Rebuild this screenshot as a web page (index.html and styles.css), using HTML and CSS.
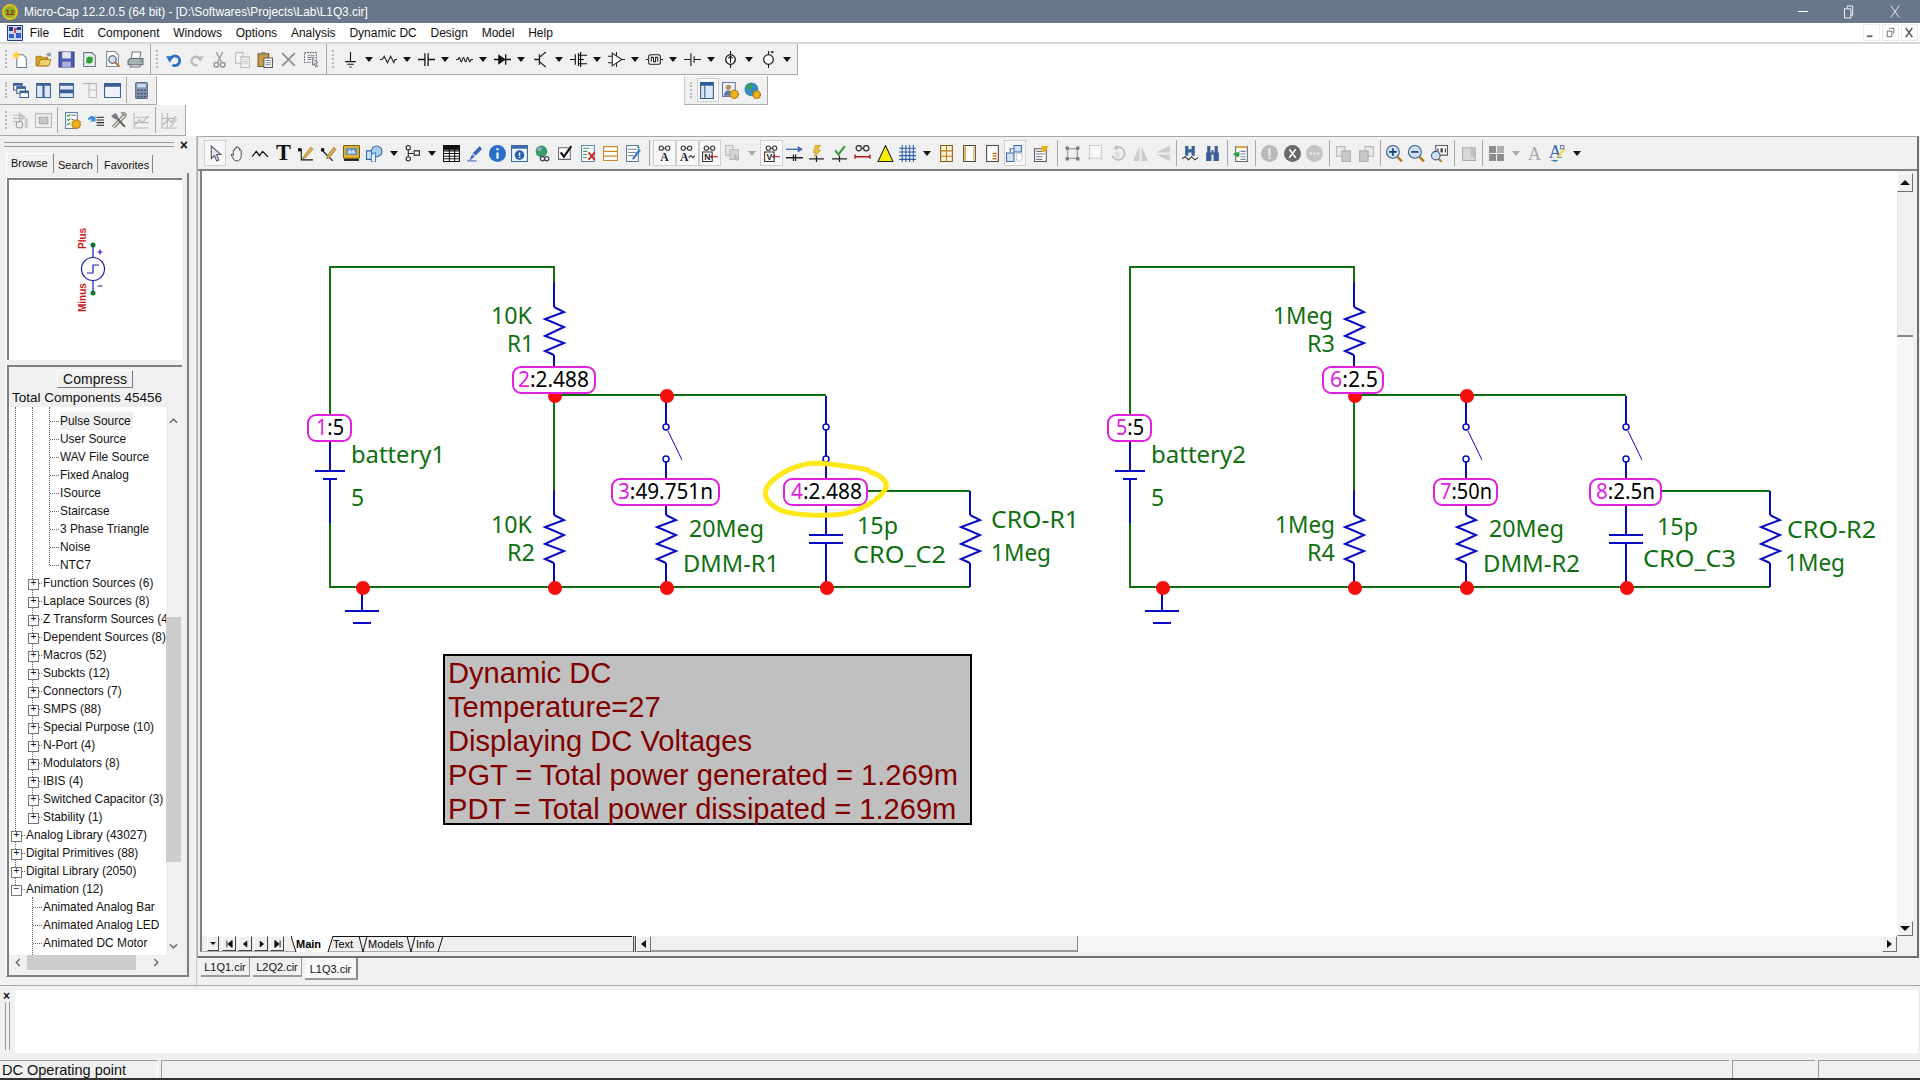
FILE: index.html
```html
<!DOCTYPE html>
<html lang="en">
<head>
  <meta charset="UTF-8" />
  <title>Micro-Cap 12.2.0.5 (64 bit) - [D:\Softwares\Projects\Lab\L1Q3.cir]</title>
  <link rel="stylesheet" href="styles.css">
</head>
<body>

  <!-- Icon set -->
  <svg class="defs" aria-hidden="true">
    <defs>
      <symbol id="i-new" viewBox="0 0 16 16"><path d="M4.5 3.5h6l3 3v9h-9z" fill="#fff" stroke="#6a7a8a"/><path d="M4 0l1 2 2-1-1 2 2 1-2 1 1 2-2-1-1 2-1-2-2 1 1-2-2-1 2-1-1-2 2 1z" fill="#ffd23c"/></symbol>
      <symbol id="i-open" viewBox="0 0 16 16"><path d="M1 5h5l1 1h5v8H1z" fill="#d9a02c" stroke="#9a7418" stroke-width=".8"/><path d="M3 14l2-6h10l-2 6z" fill="#f4d06c" stroke="#9a7418" stroke-width=".8"/><path d="M10 4q2-3 4-2l1-1v4h-4l1-1q-1-.5-2 0z" fill="#8a9bb0"/></symbol>
      <symbol id="i-save" viewBox="0 0 16 16"><path d="M1 1h14v14H1z" fill="#4c5cb8" stroke="#2c3a80"/><path d="M4 1h8v6H4z" fill="#e4e6f0"/><path d="M4 10h8v5H4z" fill="#a8b2dc"/></symbol>
      <symbol id="i-revert" viewBox="0 0 16 16"><path d="M2.500 1.500h8l3 3v10h-11z" fill="#e8eef0" stroke="#6a7a8a"/><path d="M5 8a3 3 0 0 1 5-2l1-1v4H7l1-1a1.500 1.500 0 0 0-2 1zM11 9a3 3 0 0 1-5 2l-1 1V8h4l-1 1a1.500 1.500 0 0 0 2-1z" fill="#2aa02a"/></symbol>
      <symbol id="i-preview" viewBox="0 0 16 16"><path d="M2.500 .5h8l3 3v11h-11z" fill="#fff" stroke="#7a8a9a"/><circle cx="8" cy="8" r="3.500" fill="#cfe2f4" stroke="#445"/><path d="M10.500 10.500l4 4" stroke="#b5792a" stroke-width="2"/></symbol>
      <symbol id="i-print" viewBox="0 0 16 16"><path d="M5 1h8l-1 6H4z" fill="#fff" stroke="#778"/><path d="M3 7h12v6H1v-4z" fill="#a8b0b8" stroke="#667"/><path d="M4 13h9l-1 2H3z" fill="#e8e8e8" stroke="#778"/><path d="M12 9h2v1h-2z" fill="#2b2"/></symbol>
      <symbol id="i-undo" viewBox="0 0 16 16"><path d="M5 8a4.500 4.500 0 1 1 2 5" fill="none" stroke="#2a72c8" stroke-width="2.600"/><path d="M1 5h7l-3.500 6z" fill="#2a72c8"/></symbol>
      <symbol id="i-redo" viewBox="0 0 16 16"><path d="M11 8a4 4 0 1 0-2 5" fill="none" stroke="#bcbcbc" stroke-width="2.200"/><path d="M15 5H8l3.500 5z" fill="#bcbcbc"/></symbol>
      <symbol id="i-cut" viewBox="0 0 16 16"><path d="M5 1l5 10M11 1L6 11" stroke="#aaa" stroke-width="1.500"/><circle cx="5" cy="13" r="2.200" fill="none" stroke="#999" stroke-width="1.500"/><circle cx="11" cy="13" r="2.200" fill="none" stroke="#999" stroke-width="1.500"/></symbol>
      <symbol id="i-copy" viewBox="0 0 16 16"><path d="M1.500 1.500h7v10h-7z" fill="#f4f4f4" stroke="#bbb"/><path d="M6.500 5.500h8v10h-8z" fill="#f4f4f4" stroke="#bbb"/><path d="M8 8h5M8 10h5M8 12h5" stroke="#ccc"/></symbol>
      <symbol id="i-paste" viewBox="0 0 16 16"><path d="M1 2.500h10v12H1z" fill="#c89a44" stroke="#7a5a1a"/><path d="M4 1h4v3H4z" fill="#888"/><path d="M6.500 6.500h8v9h-8z" fill="#fff" stroke="#555"/><path d="M8 9h5M8 11h5M8 13h5" stroke="#789"/></symbol>
      <symbol id="i-del" viewBox="0 0 16 16"><path d="M2 2l12 12M14 2L2 14" stroke="#909090" stroke-width="1.700"/></symbol>
      <symbol id="i-selall" viewBox="0 0 16 16"><path d="M1.500 1.500h11v9h-11z" fill="#fff" stroke="#555" stroke-dasharray="1.500 1"/><path d="M4 4h7M4 6h7M4 8h4" stroke="#889"/><path d="M9 7l5 4-2 .5 1.500 3-1.500.5-1.500-3-1.500 1.500z" fill="#dde" stroke="#556" stroke-width=".7"/></symbol>

      <symbol id="i-gnd" viewBox="0 0 16 16"><path d="M8 1v9M3 10h10M5 12.500h6M7 15h2" stroke="#111" fill="none"/></symbol>
      <symbol id="i-res" viewBox="0 0 16 16"><path d="M0 8h2l2-3 3 6 3-6 3 6 1-3h2" stroke="#222" fill="none"/></symbol>
      <symbol id="i-cap" viewBox="0 0 16 16"><path d="M0 8h6.500M9.500 8H16M6.500 2v12M9.500 2v12" stroke="#111" stroke-width="1.200" fill="none"/></symbol>
      <symbol id="i-ind" viewBox="0 0 16 16"><path d="M0 8h2q1-4 2 0t2 0 2 0 2 0 2 0 2 0h2" stroke="#222" fill="none"/></symbol>
      <symbol id="i-diode" viewBox="0 0 16 16"><path d="M0 8h16M11 3v10" stroke="#111" stroke-width="1.200"/><path d="M4 3l7 5-7 5z" fill="#111"/></symbol>
      <symbol id="i-bjt" viewBox="0 0 16 16"><path d="M2 8h5M7 3v10M7 6l6-5M7 10l6 5" stroke="#222" stroke-width="1.200" fill="none"/></symbol>
      <symbol id="i-mos" viewBox="0 0 16 16"><path d="M0 8h5M5 3v10M8 2v12M8 4h8M8 12h8M8 8h5M10 1v14" stroke="#111" stroke-width="1.100" fill="none"/></symbol>
      <symbol id="i-opamp" viewBox="0 0 16 16"><path d="M4 2l9 6-9 6z" fill="#fff" stroke="#222"/><path d="M0 5h4M0 11h4M13 8h3M8 1v4M8 11v4" stroke="#222"/></symbol>
      <symbol id="i-ic" viewBox="0 0 16 16"><rect x="2.500" y="3.500" width="11" height="9" rx="2" fill="#fff" stroke="#222"/><path d="M5 10V6h2v4h2V6h2v4M0 8h2M14 8h2" stroke="#222" fill="none"/></symbol>
      <symbol id="i-batt" viewBox="0 0 16 16"><path d="M0 8h6.500M9.500 8H16M6.500 2v12M9.500 5v6" stroke="#222" stroke-width="1.100" fill="none"/></symbol>
      <symbol id="i-isrc" viewBox="0 0 16 16"><circle cx="8" cy="8" r="4.500" fill="#fff" stroke="#111" stroke-width="1.200"/><path d="M8 0v3.500M8 12.500V16M8 11V5M6 7l2-2.500L10 7" stroke="#111" fill="none"/></symbol>
      <symbol id="i-vsrc" viewBox="0 0 16 16"><circle cx="8" cy="8" r="4.500" fill="#fff" stroke="#222" stroke-width="1.200"/><path d="M8 0v3.500M8 12.500V16M10 1h3M11.500 0v2" stroke="#222" fill="none"/></symbol>

      <symbol id="i-cascade" viewBox="0 0 16 16"><path d="M1.500 1.500h8v6h-8z" fill="#fff" stroke="#3a5f96"/><path d="M1.500 1.500h8v2h-8z" fill="#3a5f96"/><path d="M4.500 4.500h8v6h-8z" fill="#fff" stroke="#3a5f96"/><path d="M4.500 4.500h8v2h-8z" fill="#3a5f96"/><path d="M7.500 8.500h8v6h-8z" fill="#fff" stroke="#3a5f96"/><path d="M7.500 8.500h8v2h-8z" fill="#3a5f96"/></symbol>
      <symbol id="i-tilev" viewBox="0 0 16 16"><path d="M1.500 1.500h6v13h-6zM8.500 1.500h6v13h-6z" fill="#dfe8f4" stroke="#3a5f96"/><path d="M1.500 1.500h6v2h-6zM8.500 1.500h6v2h-6z" fill="#3a5f96"/></symbol>
      <symbol id="i-tileh" viewBox="0 0 16 16"><path d="M1.500 1.500h13v6h-13zM1.500 8.500h13v6h-13z" fill="#dfe8f4" stroke="#3a5f96"/><path d="M1.500 1.500h13v2h-13zM1.500 8.500h13v2h-13z" fill="#3a5f96"/></symbol>
      <symbol id="i-overlap" viewBox="0 0 16 16"><path d="M1.500 1.500h6v13h7v-7h-7" fill="#f4f4f4" stroke="#b8b8b8"/><path d="M7.500 1.500h7v6" fill="none" stroke="#b8b8b8"/></symbol>
      <symbol id="i-window" viewBox="0 0 16 16"><path d="M.5 1.500h15v13H.5z" fill="#eef3fa" stroke="#3a5f96"/><path d="M.5 1.500h15v3H.5z" fill="#3a5f96"/></symbol>
      <symbol id="i-calc" viewBox="0 0 16 16"><rect x="2.500" y=".5" width="11" height="15" rx="1" fill="#8a9ab8" stroke="#5a6a88"/><path d="M4 2h8v3H4z" fill="#cde"/><path d="M4 7h2v1.500H4zM7 7h2v1.500H7zM10 7h2v1.500h-2zM4 10h2v1.500H4zM7 10h2v1.500H7zM10 10h2v1.500h-2zM4 13h2v1.500H4zM7 13h2v1.500H7zM10 13h2v1.500h-2z" fill="#444c66"/></symbol>

      <symbol id="i-run" viewBox="0 0 16 16"><path d="M1 3h7M1 6h7M1 9h4M7 1l5 4-5 4z" fill="#ccc" stroke="#bbb"/><circle cx="7" cy="12" r="3" fill="none" stroke="#999"/><path d="M12 6h3v9h-3z" fill="#ccc"/></symbol>
      <symbol id="i-stop" viewBox="0 0 16 16"><path d="M.5 1.500h15v13H.5z" fill="#eee" stroke="#bbb"/><path d="M4 5h8v6H4z" fill="#c8c8c8" stroke="#aaa"/></symbol>
      <symbol id="i-props" viewBox="0 0 16 16"><path d="M1.500 .5h11v15h-11z" fill="#fff" stroke="#5a7fae"/><path d="M3 3l1 1 2-2M3 7l1 1 2-2M3 11l1 1 2-2" fill="none" stroke="#292"/><path d="M7 3h4M7 7h2" stroke="#669"/><circle cx="11.500" cy="11.500" r="4" fill="#f0b020" stroke="#b57a10" stroke-dasharray="1.500 .7" stroke-width="1.500"/></symbol>
      <symbol id="i-listgo" viewBox="0 0 16 16"><path d="M1 6q3-4 6-1l1-2v6H3l1.500-1.500Q3 6 1 8z" fill="#3a8ad4"/><path d="M9 5h7M9 7.500h7M9 10h7M9 12.500h7" stroke="#222"/></symbol>
      <symbol id="i-tools" viewBox="0 0 16 16"><path d="M2 14L12 3M4 15L14 5" stroke="#888" stroke-width="1.300"/><path d="M14 14L5 4" stroke="#665" stroke-width="2"/><path d="M1 4l4-3 3 3-2 1-1 2z" fill="#778"/><path d="M10 1a3 3 0 0 1 5 4l-2-1-1-1z" fill="#999"/></symbol>
      <symbol id="i-chart" viewBox="0 0 16 16"><path d="M1 1v14h14M1 5h14M1 10h14" fill="none" stroke="#bbb"/><path d="M2 12l4-5 3 3 5-6" fill="none" stroke="#aaa"/></symbol>
      <symbol id="i-chart2" viewBox="0 0 16 16"><path d="M1 1v14h14M1 6h12M6 1v13" fill="none" stroke="#bbb"/><path d="M2 12l5-5 3 3 4-6" fill="none" stroke="#aaa"/><path d="M8 14l6-8 1.500 1-6 8z" fill="#ccc"/></symbol>

      <symbol id="i-panel" viewBox="0 0 16 16"><path d="M1.500 .5h12v15h-12z" fill="#dfe8f4" stroke="#2d5a96"/><path d="M1.500 .5h12v3h-12z" fill="#2d5a96"/><path d="M5.500 3.500v12" stroke="#2d5a96"/></symbol>
      <symbol id="i-people" viewBox="0 0 16 16"><path d="M.5 .5h12v13H.5z" fill="#e8f0f8" stroke="#6a7a9a"/><circle cx="6" cy="5" r="2.500" fill="#c08a5a"/><path d="M2 13q0-5 4-5t4 5z" fill="#5a7aa8"/><circle cx="11.500" cy="11.500" r="3.800" fill="#f0b020" stroke="#b57a10" stroke-dasharray="1.500 .7" stroke-width="1.500"/></symbol>
      <symbol id="i-globegear" viewBox="0 0 16 16"><circle cx="7" cy="7" r="6.500" fill="#3a8ac4"/><path d="M3 3q3-2 5 0l-1 3-4 1zM8 9l4-1-1 4-3 1z" fill="#3aa03a"/><circle cx="12" cy="12" r="3.500" fill="#f0b020" stroke="#b57a10" stroke-dasharray="1.500 .7" stroke-width="1.500"/></symbol>

      <symbol id="i-pointer" viewBox="0 0 16 16"><path d="M5 1v12l3-3 2 5 2-1-2-5h4z" fill="#dfe6ee" stroke="#556"/></symbol>
      <symbol id="i-hand" viewBox="0 0 16 16"><path d="M4 10V5q1-1 1.500 0V3q1-1 1.500 0v-1q1-1 1.500 0v1q1-1 1.500 0v2q1-1 1.500 0v6q-1 4-4 4t-4-3L2 9q1-1 2 1z" fill="#f4f4f4" stroke="#333" stroke-width=".8"/></symbol>
      <symbol id="i-wave" viewBox="0 0 16 16"><path d="M0 11l4-5 3 4 3-4 5 5" fill="none" stroke="#111" stroke-width="1.200"/></symbol>
      <symbol id="i-text" viewBox="0 0 16 16"><text class="ic-serif" x="8" y="14.500" text-anchor="middle">T</text></symbol>
      <symbol id="i-wirepen" viewBox="0 0 16 16"><path d="M1 4h3v10h11" fill="none" stroke="#111"/><path d="M1 3h3v3H1z" fill="#111"/><path d="M6 11l7-9 2 2-7 8-3 1z" fill="#e8b050" stroke="#8a6a20" stroke-width=".6"/></symbol>
      <symbol id="i-wirepen2" viewBox="0 0 16 16"><path d="M1 4l11 11" fill="none" stroke="#111"/><path d="M1 3h3v3H1z" fill="#111"/><path d="M7 10l6-8 2 2-6 8-3 1z" fill="#d8a850" stroke="#8a6a20" stroke-width=".6"/></symbol>
      <symbol id="i-bus" viewBox="0 0 16 16"><rect x=".5" y=".5" width="15" height="12" rx="1" fill="#e8b820" stroke="#7a5a10"/><path d="M2.500 2.500h11v7h-11z" fill="#6a90c0"/><path d="M4 8l2-4 2 2 2-2 2 4z" fill="#cde"/><path d="M1 13h14v2H1z" fill="#222"/></symbol>
      <symbol id="i-shapes" viewBox="0 0 16 16"><path d="M.5 5.500h8v8h-8z" fill="#cfe2f4" stroke="#2d6aa6"/><circle cx="10" cy="6" r="5" fill="#a8cdee" stroke="#2d6aa6"/><path d="M5 16V9l4-2v9z" fill="#e8f2fb" stroke="#2d6aa6" stroke-width=".8"/></symbol>
      <symbol id="i-flow" viewBox="0 0 16 16"><circle cx="4" cy="2.500" r="2" fill="#fff" stroke="#222"/><path d="M9.500 5.500h5v4h-5z" fill="#fff" stroke="#222"/><circle cx="4" cy="13" r="2" fill="#fff" stroke="#222"/><path d="M4 4.500V11M4 8h5" stroke="#222"/></symbol>
      <symbol id="i-table" viewBox="0 0 16 16"><path d="M.5 .5h15v15H.5z" fill="#fff" stroke="#111"/><path d="M.5 1h15v3H.5zM1 5.500h14M1 8h14M1 10.500h14M1 13h14M6 4v11M11 4v11" fill="#111" stroke="#111"/></symbol>
      <symbol id="i-pen" viewBox="0 0 16 16"><path d="M3 15l3-7 7-7 2 3-7 7z" fill="#3a6ab8"/><path d="M1 15h9" stroke="#3a6ab8"/><path d="M6 8l3 3" stroke="#fff"/></symbol>
      <symbol id="i-info" viewBox="0 0 16 16"><circle cx="8" cy="8" r="8" fill="#2a6ec8"/><path d="M7 3h2v2H7zM7 7h2v6H7z" fill="#fff"/></symbol>
      <symbol id="i-help" viewBox="0 0 16 16"><path d="M.5 .5h15v15H.5z" fill="#eef3fa" stroke="#3a6aa6"/><path d="M.5 .5h15v3H.5z" fill="#3a6aa6"/><circle cx="8" cy="9.500" r="4.500" fill="#2a60b0"/><path d="M7.300 7h1.400v3H7.300zM7.300 11h1.400v1.200H7.300z" fill="#fff"/></symbol>
      <symbol id="i-globelink" viewBox="0 0 16 16"><circle cx="7" cy="6" r="5.500" fill="#3a9a6a"/><path d="M4 2q3-1 4 1L6 6 3 5z" fill="#8ac"/><path d="M6 13a2 2 0 0 1 4 0a2 2 0 0 1-4 0M10 13a2 2 0 0 1 4 0a2 2 0 0 1-4 0" fill="none" stroke="#445" stroke-width="1.200"/></symbol>
      <symbol id="i-check" viewBox="0 0 16 16"><path d="M1.500 2.500h11v11h-11z" fill="#fff" stroke="#667"/><path d="M3.500 7l3 4 7-10" fill="none" stroke="#111" stroke-width="2"/></symbol>
      <symbol id="i-xchart" viewBox="0 0 16 16"><path d="M1.500 .5h12v15h-12z" fill="#fff" stroke="#5a8aa6"/><path d="M3 3h6M3 6h4M3 9h4M3 12h4" stroke="#3a9a5a"/><path d="M8 7l6 7M14 7l-6 7" stroke="#d02020" stroke-width="1.700"/></symbol>
      <symbol id="i-bars" viewBox="0 0 16 16"><path d="M1.500 1.500h13v13h-13z" fill="#fff" stroke="#c88a2a"/><path d="M1.500 6h13M1.500 10.500h13" stroke="#c88a2a" stroke-width="1.300"/></symbol>
      <symbol id="i-docedit" viewBox="0 0 16 16"><path d="M1.500 .5h11v15h-11z" fill="#fff" stroke="#5a7a9a"/><path d="M3 4h8M3 7h8M3 10h5" stroke="#78a"/><path d="M7 12l6-8 2 1-6 8-2 1z" fill="#3a7ac8"/><path d="M11 1l3 1-1 2z" fill="#2a8"/></symbol>
      <symbol id="i-ga" viewBox="0 0 16 16"><path d="M3 3a2 2 0 0 1 4 0a2 2 0 0 1-4 0M9 3a2 2 0 0 1 4 0a2 2 0 0 1-4 0M7 3h2" fill="none" stroke="#333"/><text class="ic-a" x="8" y="15" text-anchor="middle" fill="#223">A</text></symbol>
      <symbol id="i-gawave" viewBox="0 0 16 16"><path d="M2 3a2 2 0 0 1 4 0a2 2 0 0 1-4 0M8 3a2 2 0 0 1 4 0a2 2 0 0 1-4 0M6 3h2" fill="none" stroke="#333"/><text class="ic-a" x="5" y="15" text-anchor="middle" fill="#223">A</text><path d="M9 12l2-2 2 2 2-2" fill="none" stroke="#445"/></symbol>
      <symbol id="i-gn" viewBox="0 0 16 16"><path d="M3 3a2 2 0 0 1 4 0a2 2 0 0 1-4 0M9 3a2 2 0 0 1 4 0a2 2 0 0 1-4 0M7 3h2" fill="none" stroke="#333"/><path d="M1.500 6.500h9v9h-9z" fill="#fff" stroke="#333"/><text class="ic-n" x="6" y="14" text-anchor="middle" fill="#223">N</text><path d="M11 11h5" stroke="#b02020"/><path d="M11 9v4l-3-2z" fill="#b02020"/></symbol>
      <symbol id="i-pages" viewBox="0 0 16 16"><path d="M1.500 .5h7v9h-7z" fill="#e4e4e4" stroke="#bbb"/><path d="M5.500 4.500h8v9h-8z" fill="#d4d4d4" stroke="#bbb"/><path d="M9 8l5 4-1 3-3-1z" fill="#bbb"/></symbol>
      <symbol id="i-gv" viewBox="0 0 16 16"><path d="M3 3a2 2 0 0 1 4 0a2 2 0 0 1-4 0M9 3a2 2 0 0 1 4 0a2 2 0 0 1-4 0M7 3h2" fill="none" stroke="#333"/><path d="M1.500 6.500h9v9h-9z" fill="#fff" stroke="#333"/><text class="ic-n" x="6" y="14" text-anchor="middle" fill="#222">V</text><path d="M11 11h5" stroke="#b02020"/><path d="M11 9v4l-3-2z" fill="#b02020"/></symbol>
      <symbol id="i-arrowcap" viewBox="0 0 16 16"><path d="M0 4h13" stroke="#3a6ab0" stroke-width="1.200"/><path d="M11 1l5 3-5 3z" fill="#3a6ab0"/><path d="M0 12h16M7 9v6M9 9v6" stroke="#222" stroke-width="1.200"/></symbol>
      <symbol id="i-bolt" viewBox="0 0 16 16"><path d="M7 0h5L9 5h3L6 11l1-4H5z" fill="#e8c030" stroke="#a8861a" stroke-width=".5"/><path d="M1 13h14M8 10v6" stroke="#222" stroke-width="1.200"/></symbol>
      <symbol id="i-checkcap" viewBox="0 0 16 16"><path d="M4 5l3 4 6-8" fill="none" stroke="#3a9a3a" stroke-width="2"/><path d="M1 13h14M8 10v6" stroke="#222" stroke-width="1.200"/></symbol>
      <symbol id="i-gred" viewBox="0 0 16 16"><path d="M2 3a2.500 2.500 0 0 1 5 0a2.500 2.500 0 0 1-5 0M9 3a2.500 2.500 0 0 1 5 0a2.500 2.500 0 0 1-5 0M7 3h2" fill="none" stroke="#333" stroke-width="1.200"/><path d="M1 11h14M1 9v4M15 9v4" stroke="#b01818" stroke-width="1.300"/></symbol>
      <symbol id="i-tri" viewBox="0 0 16 16"><path d="M8 .5l7 15H1z" fill="#ffee00" stroke="#222"/></symbol>
      <symbol id="i-grid" viewBox="0 0 16 16"><path d="M3 0v16M6.500 0v16M10 0v16M13.500 0v16M0 3h16M0 6.500h16M0 10h16M0 13.500h16" stroke="#2a5ea8"/></symbol>
      <symbol id="i-forange" viewBox="0 0 16 16"><path d="M2.500 .5h11v15h-11z" fill="#fff2d8" stroke="#7a5a1a"/><path d="M2.500 5.500h11M2.500 10.500h11M8 .5v15" stroke="#c07818"/></symbol>
      <symbol id="i-doc" viewBox="0 0 16 16"><path d="M2.500 .5h11v15h-11z" fill="#fff" stroke="#4a4a3a"/><path d="M4 1.500v13" stroke="#e0b040" stroke-width="1.500"/><path d="M12 1.500v13" stroke="#e0b040"/></symbol>
      <symbol id="i-doc2" viewBox="0 0 16 16"><path d="M2.500 .5h11v15h-11z" fill="#fff" stroke="#4a4a3a"/><path d="M8 8h4M8 10.500h4M8 13h4" stroke="#c07818" stroke-width="1.300"/></symbol>
      <symbol id="i-layout" viewBox="0 0 16 16"><path d="M.5 7.500h7v8h-7z" fill="#cfe2f4" stroke="#3a6ab0"/><path d="M7.500 .5h7v6h-7z" fill="#cfe2f4" stroke="#3a6ab0"/><path d="M10 8h5v7h-5z" fill="#fff" stroke="#9ab" stroke-dasharray="1 1"/><path d="M4 7V3.500h3" fill="none" stroke="#3a6ab0"/></symbol>
      <symbol id="i-note" viewBox="0 0 16 16"><path d="M1.500 3.500h11v12h-11z" fill="#fff" stroke="#556"/><path d="M3 6h8M3 8.500h8M3 11h6M3 13.500h6" stroke="#778"/><path d="M8 1l7 0-4 6-3-1z" fill="#e8b820"/></symbol>
      <symbol id="i-bracket" viewBox="0 0 16 16"><path d="M3.500 3.500h9v9h-9z" fill="none" stroke="#888"/><path d="M1.500 1.500h3v3h-3zM11.500 1.500h3v3h-3zM1.500 11.500h3v3h-3zM11.500 11.500h3v3h-3z" fill="#777"/></symbol>
      <symbol id="i-greyrect" viewBox="0 0 16 16"><path d="M2.500 .5h11v12h-11z" fill="#fafafa" stroke="#ccc"/><path d="M1 14l2-2M15 14l-2-2" stroke="#ccc"/></symbol>
      <symbol id="i-rotate" viewBox="0 0 16 16"><path d="M8 2a6 6 0 1 1-5 8" fill="none" stroke="#bbb" stroke-width="1.500"/><path d="M8 0v5l-4-2z" fill="#bbb"/><path d="M6 6h4v6H6z" fill="#ddd"/></symbol>
      <symbol id="i-flip" viewBox="0 0 16 16"><path d="M7 1v14H1zM9 1v14h6z" fill="#ccc"/></symbol>
      <symbol id="i-flip2" viewBox="0 0 16 16"><path d="M14 1v6H1zM14 9v6L1 9z" fill="#ccc"/></symbol>
      <symbol id="i-binw" viewBox="0 0 16 16"><path d="M3 1h3v9H3zM9 1h3v9H9zM6 4h3v3H6z" fill="#3a5f96"/><path d="M0 13l3-2 3 3 3-3 3 3 3-2" fill="none" stroke="#333"/></symbol>
      <symbol id="i-bin" viewBox="0 0 16 16"><path d="M3 1h3v6H3zM10 1h3v6h-3zM2 7h5v8H2zM9 7h5v8H9zM7 5h2v4H7z" fill="#3a5f96"/></symbol>
      <symbol id="i-notegreen" viewBox="0 0 16 16"><path d="M2.500 1.500h11v14h-11z" fill="#fff" stroke="#667"/><path d="M3 1h10v2H3z" fill="#d8b040"/><path d="M7 6h5M7 8.500h5M7 11h5M7 13.500h5" stroke="#789"/><path d="M0 10q1-4 5-3l1-2v6H2l1-1q-1-1-3 0z" fill="#2aa04a"/></symbol>
      <symbol id="i-cbang" viewBox="0 0 16 16"><circle cx="8" cy="8" r="8" fill="#b8b8b8"/><path d="M7 3h2v7H7zM7 11h2v2H7z" fill="#eee"/></symbol>
      <symbol id="i-cx" viewBox="0 0 16 16"><circle cx="8" cy="8" r="8" fill="#6a6a6a"/><path d="M5 4l6 8M11 4l-6 8" stroke="#fff" stroke-width="1.500"/></symbol>
      <symbol id="i-cdots" viewBox="0 0 16 16"><circle cx="8" cy="8" r="8" fill="#c4c4c4"/><path d="M3.500 7h2v2h-2zM7 7h2v2H7zM10.500 7h2v2h-2z" fill="#f0f0f0"/></symbol>
      <symbol id="i-stack" viewBox="0 0 16 16"><path d="M1.500 1.500h8v9h-8z" fill="#e8e8e8" stroke="#b8b8b8"/><path d="M6.500 5.500h8v10h-8z" fill="#c8c8c8" stroke="#b0b0b0"/></symbol>
      <symbol id="i-stack2" viewBox="0 0 16 16"><path d="M6.500 1.500h8v9h-8z" fill="#e8e8e8" stroke="#b8b8b8"/><path d="M1.500 5.500h8v10h-8z" fill="#c8c8c8" stroke="#b0b0b0"/></symbol>
      <symbol id="i-zin" viewBox="0 0 16 16"><circle cx="6.500" cy="6.500" r="6" fill="#cfe2f4" stroke="#3a5a8a"/><path d="M3 6.500h7M6.500 3v7" stroke="#1a3a6a" stroke-width="1.500"/><path d="M10.500 11l4.500 4.500" stroke="#b5792a" stroke-width="2.400"/></symbol>
      <symbol id="i-zout" viewBox="0 0 16 16"><circle cx="6.500" cy="6.500" r="6" fill="#cfe2f4" stroke="#3a5a8a"/><path d="M3 6.500h7" stroke="#1a3a6a" stroke-width="1.500"/><path d="M10.500 11l4.500 4.500" stroke="#b5792a" stroke-width="2.400"/></symbol>
      <symbol id="i-z100" viewBox="0 0 16 16"><path d="M4.500 .5h11v9h-11z" fill="#fff" stroke="#556"/><path d="M6 3h1v4H6zM9 3h2v4H9zM13 3h1v4h-1z" fill="#333"/><circle cx="4.500" cy="10" r="4" fill="#cfe2f4" stroke="#3a5a8a"/><path d="M7 13l3 3" stroke="#b5792a" stroke-width="2"/></symbol>
      <symbol id="i-greypage" viewBox="0 0 16 16"><path d="M1.500 2.500h12v12h-12z" fill="#d8d8d8" stroke="#aaa"/><path d="M9 1l5 2v9l-5-2z" fill="#c0c0c0"/></symbol>
      <symbol id="i-grid4" viewBox="0 0 16 16"><path d="M1 1h6.500v6.500H1zM8.500 1H15v6.500H8.500zM1 8.500h6.500V15H1zM8.500 8.500H15V15H8.500z" fill="#8c8c8c"/><path d="M8.500 1H15v6.500H8.500z" fill="#b0b0b0"/></symbol>
      <symbol id="i-ag" viewBox="0 0 16 16"><text class="ic-ag" x="8" y="14.500" text-anchor="middle" fill="#a8a8a8">A</text></symbol>
      <symbol id="i-acol" viewBox="0 0 16 16"><text class="ic-ag" x="6" y="12" text-anchor="middle" fill="#3a6ab8">A</text><path d="M8 11l5-8 2 1-5 8z" fill="#f0d840"/><path d="M11 .5h3v3h-3z" fill="#fff" stroke="#5a7aa8"/><path d="M1 14h8l-3 2z" fill="#3a8ab8"/></symbol>
      <symbol id="i-mdimin" viewBox="0 0 16 16"><path d="M3 11h6v2H3z" fill="#666"/></symbol>
    </defs>
  </svg>

  <!-- Title bar -->
  <header class="titlebar">
    <svg class="app-icon" viewBox="0 0 16 16"><circle cx="8" cy="8" r="7" fill="#7fb62c" stroke="#e8c020" stroke-width="2"/><text class="app-num" x="8" y="11" text-anchor="middle">12</text></svg>
    <span class="title-text">Micro-Cap 12.2.0.5 (64 bit) - [D:\Softwares\Projects\Lab\L1Q3.cir]</span>
    <div class="win-btns">
      <span class="win-min"></span>
      <svg class="win-max" viewBox="0 0 12 14"><path d="M3.500 2.500v-2h6v10h-2M.5 3.500h7v10h-7z" fill="none" stroke="#fff"/></svg>
      <svg class="win-close" viewBox="0 0 12 14"><path d="M1 0l10 14M11 0L1 14" stroke="#fff"/></svg>
    </div>
  </header>

  <!-- Menu -->
  <nav class="menubar">
    <svg class="menu-icon" viewBox="0 0 16 16"><path d="M.5 .5h15v15H.5z" fill="#c8d8f0" stroke="#223a8a"/><path d="M2 2h4v4H2zM10 2h4v3h-4z" fill="#223a8a"/><path d="M2 9h5v4H2zM9 8h5v5H9z" fill="#3a5ac8"/><path d="M7 4h3M8 5v3" stroke="#d02020" stroke-width="1.500"/></svg>
    <span>File</span><span>Edit</span><span>Component</span><span>Windows</span><span>Options</span><span>Analysis</span><span>Dynamic DC</span><span>Design</span><span>Model</span><span>Help</span>
    <div class="mdi-btns">
      <span class="mdi"><svg viewBox="0 0 16 16"><use href="#i-mdimin"/></svg></span>
      <span class="mdi"><svg viewBox="0 0 16 16"><path d="M6.500 3.500h5v5h-1M4.500 6.500h5v6h-5z" fill="none" stroke="#666"/></svg></span>
      <span class="mdi"><svg viewBox="0 0 16 16"><path d="M4 3l7 10M11 3L4 13" stroke="#555" stroke-width="1.600"/></svg></span>
    </div>
  </nav>

  <!-- Main toolbars -->
  <section class="top-bars">
    <div class="bar-row">
      <div class="tb tb-file">
        <span class="b"><svg class="ic"><use href="#i-new"/></svg></span>
        <span class="b"><svg class="ic"><use href="#i-open"/></svg></span>
        <span class="b"><svg class="ic"><use href="#i-save"/></svg></span>
        <span class="b"><svg class="ic"><use href="#i-revert"/></svg></span>
        <span class="b"><svg class="ic"><use href="#i-preview"/></svg></span>
        <span class="b"><svg class="ic"><use href="#i-print"/></svg></span>
      </div>
      <div class="tb tb-edit">
        <span class="b"><svg class="ic"><use href="#i-undo"/></svg></span>
        <span class="b"><svg class="ic"><use href="#i-redo"/></svg></span>
        <span class="b"><svg class="ic"><use href="#i-cut"/></svg></span>
        <span class="b"><svg class="ic"><use href="#i-copy"/></svg></span>
        <span class="b"><svg class="ic"><use href="#i-paste"/></svg></span>
        <span class="b"><svg class="ic"><use href="#i-del"/></svg></span>
        <span class="b"><svg class="ic"><use href="#i-selall"/></svg></span>
      </div>
      <div class="tb tb-parts">
        <span class="p"><svg class="ic"><use href="#i-gnd"/></svg></span><span class="p drop"></span>
        <span class="p"><svg class="ic"><use href="#i-res"/></svg></span><span class="p drop"></span>
        <span class="p"><svg class="ic"><use href="#i-cap"/></svg></span><span class="p drop"></span>
        <span class="p"><svg class="ic"><use href="#i-ind"/></svg></span><span class="p drop"></span>
        <span class="p"><svg class="ic"><use href="#i-diode"/></svg></span><span class="p drop"></span>
        <span class="p"><svg class="ic"><use href="#i-bjt"/></svg></span><span class="p drop"></span>
        <span class="p"><svg class="ic"><use href="#i-mos"/></svg></span><span class="p drop"></span>
        <span class="p"><svg class="ic"><use href="#i-opamp"/></svg></span><span class="p drop"></span>
        <span class="p"><svg class="ic"><use href="#i-ic"/></svg></span><span class="p drop"></span>
        <span class="p"><svg class="ic"><use href="#i-batt"/></svg></span><span class="p drop"></span>
        <span class="p"><svg class="ic"><use href="#i-isrc"/></svg></span><span class="p drop"></span>
        <span class="p"><svg class="ic"><use href="#i-vsrc"/></svg></span><span class="p drop"></span>
      </div>
    </div>
    <div class="bar-row bar-row2">
      <div class="tb tb-windows">
        <span class="b"><svg class="ic"><use href="#i-cascade"/></svg></span>
        <span class="b"><svg class="ic"><use href="#i-tilev"/></svg></span>
        <span class="b"><svg class="ic"><use href="#i-tileh"/></svg></span>
        <span class="b"><svg class="ic"><use href="#i-overlap"/></svg></span>
        <span class="b"><svg class="ic"><use href="#i-window"/></svg></span>
        <i class="sep s6"></i>
        <span class="b"><svg class="ic"><use href="#i-calc"/></svg></span>
      </div>
      <div class="tb tb-float">
        <span class="b on"><svg class="ic"><use href="#i-panel"/></svg></span>
        <span class="b"><svg class="ic"><use href="#i-people"/></svg></span>
        <span class="b"><svg class="ic"><use href="#i-globegear"/></svg></span>
      </div>
    </div>
    <div class="bar-row bar-row3">
      <div class="tb tb-run">
        <span class="b"><svg class="ic"><use href="#i-run"/></svg></span>
        <span class="b"><svg class="ic"><use href="#i-stop"/></svg></span>
        <i class="sep s6"></i>
        <span class="b"><svg class="ic"><use href="#i-props"/></svg></span>
        <span class="b"><svg class="ic"><use href="#i-listgo"/></svg></span>
        <span class="b"><svg class="ic"><use href="#i-tools"/></svg></span>
        <span class="b"><svg class="ic"><use href="#i-chart"/></svg></span>
        <i class="sep s5"></i>
        <span class="b"><svg class="ic"><use href="#i-chart2"/></svg></span>
      </div>
    </div>
  </section>

  <div class="workspace">

    <!-- Component panel -->
    <aside class="side">
      <div class="side-head"><span class="grip-h"></span><b class="side-x">×</b></div>
      <div class="side-tabs">
        <span class="stab stab-on">Browse</span>
        <span class="stab stab-search">Search</span>
        <span class="stab stab-fav">Favorites</span>
      </div>
      <div class="side-body">
        <div class="preview">
          <svg class="preview-svg" viewBox="0 0 175 182">
            <g transform="translate(-7 -178)">
              <path class="pv-part" d="M93 245v12M93 281v12"/>
              <circle class="pv-part" cx="93" cy="269" r="11.500" fill="#fff"/>
              <path class="pv-part" d="M87 273h6v-8h6M97.500 252h5M100 249.500v5M97.500 286h5"/>
              <circle cx="93" cy="245" r="2.500" fill="#0a7a2a"/>
              <circle cx="93" cy="293" r="2.500" fill="#0a7a2a"/>
              <text class="pv-text" transform="translate(86 249) rotate(-90)">Plus</text>
              <text class="pv-text" transform="translate(86 312) rotate(-90)">Minus</text>
            </g>
          </svg>
        </div>
        <div class="lib">
          <div class="compress-row"><span class="compress">Compress</span></div>
          <div class="total">Total Components 45456</div>
          <div class="tree-wrap">
            <div class="tree">
              <i class="guide g1"></i><i class="guide g2"></i><i class="guide g2b"></i><i class="guide g3"></i>
              <div class="row l3"><span class="hl">Pulse Source</span></div>
              <div class="row l3">User Source</div>
              <div class="row l3">WAV File Source</div>
              <div class="row l3">Fixed Analog</div>
              <div class="row l3">ISource</div>
              <div class="row l3">Staircase</div>
              <div class="row l3">3 Phase Triangle</div>
              <div class="row l3">Noise</div>
              <div class="row l3">NTC7</div>
              <div class="row l2 plus">Function Sources (6)</div>
              <div class="row l2 plus">Laplace Sources (8)</div>
              <div class="row l2 plus">Z Transform Sources (4)</div>
              <div class="row l2 plus">Dependent Sources (8)</div>
              <div class="row l2 plus">Macros (52)</div>
              <div class="row l2 plus">Subckts (12)</div>
              <div class="row l2 plus">Connectors (7)</div>
              <div class="row l2 plus">SMPS (88)</div>
              <div class="row l2 plus">Special Purpose (10)</div>
              <div class="row l2 plus">N-Port (4)</div>
              <div class="row l2 plus">Modulators (8)</div>
              <div class="row l2 plus">IBIS (4)</div>
              <div class="row l2 plus">Switched Capacitor (3)</div>
              <div class="row l2 plus">Stability (1)</div>
              <div class="row l1 plus">Analog Library (43027)</div>
              <div class="row l1 plus">Digital Primitives (88)</div>
              <div class="row l1 plus">Digital Library (2050)</div>
              <div class="row l1 minus">Animation (12)</div>
              <div class="row l2">Animated Analog Bar</div>
              <div class="row l2">Animated Analog LED</div>
              <div class="row l2">Animated DC Motor</div>
            </div>
            <div class="tree-vs">
              <svg class="chev" viewBox="0 0 10 6"><path d="M1 5l4-4 4 4" fill="none" stroke="#666" stroke-width="1.500"/></svg>
              <span class="tree-thumb"></span>
              <svg class="chev chev-down" viewBox="0 0 10 6"><path d="M1 1l4 4 4-4" fill="none" stroke="#666" stroke-width="1.500"/></svg>
            </div>
          </div>
          <div class="tree-hs">
            <svg class="chev-h" viewBox="0 0 6 10"><path d="M5 1L1 5l4 4" fill="none" stroke="#666" stroke-width="1.500"/></svg>
            <span class="tree-hthumb"></span>
            <svg class="chev-h" viewBox="0 0 6 10"><path d="M1 1l4 4-4 4" fill="none" stroke="#666" stroke-width="1.500"/></svg>
          </div>
        </div>
      </div>
    </aside>

    <main class="main">
      <div class="editor">

        <!-- Schematic toolbar -->
        <div class="edit-tools">
          <span class="e on"><svg class="ic"><use href="#i-pointer"/></svg></span>
          <span class="e"><svg class="ic"><use href="#i-hand"/></svg></span>
          <span class="e"><svg class="ic"><use href="#i-wave"/></svg></span>
          <span class="e"><svg class="ic"><use href="#i-text"/></svg></span>
          <span class="e"><svg class="ic"><use href="#i-wirepen"/></svg></span>
          <span class="e"><svg class="ic"><use href="#i-wirepen2"/></svg></span>
          <span class="e"><svg class="ic"><use href="#i-bus"/></svg></span>
          <span class="e"><svg class="ic"><use href="#i-shapes"/></svg></span>
          <span class="a"></span>
          <span class="e"><svg class="ic"><use href="#i-flow"/></svg></span>
          <span class="a"></span>
          <span class="e"><svg class="ic"><use href="#i-table"/></svg></span>
          <span class="e"><svg class="ic"><use href="#i-pen"/></svg></span>
          <span class="e"><svg class="ic"><use href="#i-info"/></svg></span>
          <span class="e"><svg class="ic"><use href="#i-help"/></svg></span>
          <span class="e"><svg class="ic"><use href="#i-globelink"/></svg></span>
          <span class="e"><svg class="ic"><use href="#i-check"/></svg></span>
          <span class="e"><svg class="ic"><use href="#i-xchart"/></svg></span>
          <span class="e"><svg class="ic"><use href="#i-bars"/></svg></span>
          <span class="e"><svg class="ic"><use href="#i-docedit"/></svg></span>
          <i class="sep s8"></i>
          <span class="e on"><svg class="ic"><use href="#i-ga"/></svg></span>
          <span class="e on"><svg class="ic"><use href="#i-gawave"/></svg></span>
          <span class="e on"><svg class="ic"><use href="#i-gn"/></svg></span>
          <span class="e"><svg class="ic"><use href="#i-pages"/></svg></span>
          <span class="a a-off"></span>
          <span class="e on"><svg class="ic"><use href="#i-gv"/></svg></span>
          <span class="e"><svg class="ic"><use href="#i-arrowcap"/></svg></span>
          <span class="e"><svg class="ic"><use href="#i-bolt"/></svg></span>
          <span class="e"><svg class="ic"><use href="#i-checkcap"/></svg></span>
          <span class="e"><svg class="ic"><use href="#i-gred"/></svg></span>
          <span class="e"><svg class="ic"><use href="#i-tri"/></svg></span>
          <span class="e"><svg class="ic"><use href="#i-grid"/></svg></span>
          <span class="a"></span>
          <span class="e"><svg class="ic"><use href="#i-forange"/></svg></span>
          <span class="e"><svg class="ic"><use href="#i-doc"/></svg></span>
          <span class="e"><svg class="ic"><use href="#i-doc2"/></svg></span>
          <span class="e on"><svg class="ic"><use href="#i-layout"/></svg></span>
          <span class="e e-note"><svg class="ic"><use href="#i-note"/></svg></span>
          <i class="sep s8"></i>
          <span class="e"><svg class="ic"><use href="#i-bracket"/></svg></span>
          <span class="e"><svg class="ic"><use href="#i-greyrect"/></svg></span>
          <span class="e"><svg class="ic"><use href="#i-rotate"/></svg></span>
          <span class="e"><svg class="ic"><use href="#i-flip"/></svg></span>
          <span class="e"><svg class="ic"><use href="#i-flip2"/></svg></span>
          <i class="sep s4"></i>
          <span class="e"><svg class="ic"><use href="#i-binw"/></svg></span>
          <span class="e"><svg class="ic"><use href="#i-bin"/></svg></span>
          <i class="sep s6"></i>
          <span class="e"><svg class="ic"><use href="#i-notegreen"/></svg></span>
          <i class="sep s5"></i>
          <span class="e"><svg class="ic"><use href="#i-cbang"/></svg></span>
          <span class="e"><svg class="ic"><use href="#i-cx"/></svg></span>
          <span class="e"><svg class="ic"><use href="#i-cdots"/></svg></span>
          <i class="sep s6"></i>
          <span class="e"><svg class="ic"><use href="#i-stack"/></svg></span>
          <span class="e"><svg class="ic"><use href="#i-stack2"/></svg></span>
          <i class="sep s5"></i>
          <span class="e"><svg class="ic"><use href="#i-zin"/></svg></span>
          <span class="e"><svg class="ic"><use href="#i-zout"/></svg></span>
          <span class="e"><svg class="ic"><use href="#i-z100"/></svg></span>
          <i class="sep s7"></i>
          <span class="e"><svg class="ic"><use href="#i-greypage"/></svg></span>
          <i class="sep s4"></i>
          <span class="e"><svg class="ic"><use href="#i-grid4"/></svg></span>
          <span class="a a-off"></span>
          <span class="e"><svg class="ic"><use href="#i-ag"/></svg></span>
          <span class="e"><svg class="ic"><use href="#i-acol"/></svg></span>
          <span class="a"></span>
        </div>

        <div class="edit-mid">
          <div class="canvas">
            <!-- viewBox is in page pixels -->
            <svg class="schem" viewBox="202 171 1695 765">
              <defs>
                <path id="zig" d="M0 0l10 5-19 7 19 8-19 9 19 7-19 8 9 4"/>
              </defs>

              <!-- circuit 1 -->
              <path class="wire" d="M330 415V267H554V282M330 523V587H970M554 396V490M554 395H826M867 491H970"/>
              <path class="part" d="M554 282V307M554 355V367M554 490V515M554 563V587M330 441V471M315 471H345M323 479H337M330 479V523"/>
              <use class="part" href="#zig" x="554" y="307"/>
              <use class="part" href="#zig" x="554" y="515"/>
              <path class="part" d="M362 588V611M345 611H379M353 623H371"/>
              <path class="part" d="M666 396V424M666 462V479M666 505V515M666 563V587"/>
              <circle class="pin" cx="666" cy="427" r="3"/><circle class="pin" cx="666" cy="459" r="3"/>
              <path class="blade" d="M668 431L682 460"/>
              <use class="part" href="#zig" x="666" y="515"/>
              <path class="part" d="M826 396V479M826 505V535M809 535H843M809 543H843M826 543V587"/>
              <circle class="pin" cx="826" cy="427" r="3"/><circle class="pin" cx="826" cy="459" r="3"/>
              <path class="part" d="M970 491V515M970 563V587"/>
              <use class="part" href="#zig" x="970" y="515"/>

              <!-- circuit 2 -->
              <path class="wire" d="M1130 415V267H1354V282M1130 523V587H1770M1354 396V490M1354 395H1626M1661 491H1770"/>
              <path class="part" d="M1354 282V307M1354 355V367M1354 490V515M1354 563V587M1130 441V471M1115 471H1145M1123 479H1137M1130 479V523"/>
              <use class="part" href="#zig" x="1354" y="307"/>
              <use class="part" href="#zig" x="1354" y="515"/>
              <path class="part" d="M1162 588V611M1145 611H1179M1153 623H1171"/>
              <path class="part" d="M1466 396V424M1466 462V479M1466 505V515M1466 563V587"/>
              <circle class="pin" cx="1466" cy="427" r="3"/><circle class="pin" cx="1466" cy="459" r="3"/>
              <path class="blade" d="M1468 431L1482 460"/>
              <use class="part" href="#zig" x="1466" y="515"/>
              <path class="part" d="M1626 396V424M1626 462V479M1626 505V535M1609 535H1643M1609 543H1643M1626 543V587"/>
              <circle class="pin" cx="1626" cy="427" r="3"/><circle class="pin" cx="1626" cy="459" r="3"/>
              <path class="blade" d="M1628 431L1642 460"/>
              <path class="part" d="M1770 491V515M1770 563V587"/>
              <use class="part" href="#zig" x="1770" y="515"/>

              <!-- junctions -->
              <g class="dots">
                <circle cx="555" cy="396" r="7"/><circle cx="667" cy="396" r="7"/>
                <circle cx="363" cy="588" r="7"/><circle cx="555" cy="588" r="7"/><circle cx="667" cy="588" r="7"/><circle cx="827" cy="588" r="7"/>
                <circle cx="1355" cy="396" r="7"/><circle cx="1467" cy="396" r="7"/>
                <circle cx="1163" cy="588" r="7"/><circle cx="1355" cy="588" r="7"/><circle cx="1467" cy="588" r="7"/><circle cx="1627" cy="588" r="7"/>
              </g>

              <!-- part text -->
              <g class="pt">
                <text x="351" y="463" textLength="94" lengthAdjust="spacingAndGlyphs">battery1</text>
                <text x="351" y="506">5</text>
                <text x="491" y="324" textLength="41" lengthAdjust="spacingAndGlyphs">10K</text>
                <text x="507" y="352" textLength="27" lengthAdjust="spacingAndGlyphs">R1</text>
                <text x="491" y="533" textLength="41" lengthAdjust="spacingAndGlyphs">10K</text>
                <text x="507" y="561" textLength="28" lengthAdjust="spacingAndGlyphs">R2</text>
                <text x="689" y="537" textLength="75" lengthAdjust="spacingAndGlyphs">20Meg</text>
                <text x="683" y="572" textLength="96" lengthAdjust="spacingAndGlyphs">DMM-R1</text>
                <text x="857" y="534" textLength="41" lengthAdjust="spacingAndGlyphs">15p</text>
                <text x="853" y="563" textLength="93" lengthAdjust="spacingAndGlyphs">CRO_C2</text>
                <text x="991" y="528" textLength="88" lengthAdjust="spacingAndGlyphs">CRO-R1</text>
                <text x="991" y="561" textLength="60" lengthAdjust="spacingAndGlyphs">1Meg</text>

                <text x="1151" y="463" textLength="95" lengthAdjust="spacingAndGlyphs">battery2</text>
                <text x="1151" y="506">5</text>
                <text x="1273" y="324" textLength="60" lengthAdjust="spacingAndGlyphs">1Meg</text>
                <text x="1307" y="352" textLength="28" lengthAdjust="spacingAndGlyphs">R3</text>
                <text x="1275" y="533" textLength="60" lengthAdjust="spacingAndGlyphs">1Meg</text>
                <text x="1307" y="561" textLength="28" lengthAdjust="spacingAndGlyphs">R4</text>
                <text x="1489" y="537" textLength="75" lengthAdjust="spacingAndGlyphs">20Meg</text>
                <text x="1483" y="572" textLength="97" lengthAdjust="spacingAndGlyphs">DMM-R2</text>
                <text x="1657" y="535" textLength="41" lengthAdjust="spacingAndGlyphs">15p</text>
                <text x="1643" y="567" textLength="93" lengthAdjust="spacingAndGlyphs">CRO_C3</text>
                <text x="1787" y="538" textLength="89" lengthAdjust="spacingAndGlyphs">CRO-R2</text>
                <text x="1785" y="571" textLength="60" lengthAdjust="spacingAndGlyphs">1Meg</text>
              </g>

              <!-- node labels -->
              <rect class="nl" x="513" y="367" width="82" height="26" rx="8"/>
              <text class="nt" x="518" y="387" textLength="71" lengthAdjust="spacingAndGlyphs"><tspan class="nn">2</tspan>:2.488</text>
              <rect class="nl" x="308" y="415" width="43" height="26" rx="8"/>
              <text class="nt" x="316" y="435" textLength="28" lengthAdjust="spacingAndGlyphs"><tspan class="nn">1</tspan>:5</text>
              <rect class="nl" x="612" y="479" width="107" height="26" rx="8"/>
              <text class="nt" x="618" y="499" textLength="95" lengthAdjust="spacingAndGlyphs"><tspan class="nn">3</tspan>:49.751n</text>
              <rect class="nl" x="784" y="479" width="83" height="26" rx="8"/>
              <text class="nt" x="791" y="499" textLength="71" lengthAdjust="spacingAndGlyphs"><tspan class="nn">4</tspan>:2.488</text>
              <rect class="nl" x="1108" y="415" width="43" height="26" rx="8"/>
              <text class="nt" x="1116" y="435" textLength="28" lengthAdjust="spacingAndGlyphs"><tspan class="nn">5</tspan>:5</text>
              <rect class="nl" x="1323" y="367" width="60" height="26" rx="8"/>
              <text class="nt" x="1330" y="387" textLength="48" lengthAdjust="spacingAndGlyphs"><tspan class="nn">6</tspan>:2.5</text>
              <rect class="nl" x="1434" y="479" width="63" height="26" rx="8"/>
              <text class="nt" x="1440" y="499" textLength="52" lengthAdjust="spacingAndGlyphs"><tspan class="nn">7</tspan>:50n</text>
              <rect class="nl" x="1590" y="479" width="71" height="26" rx="8"/>
              <text class="nt" x="1596" y="499" textLength="59" lengthAdjust="spacingAndGlyphs"><tspan class="nn">8</tspan>:2.5n</text>

              <!-- marker around node 4 -->
              <path class="marker" d="M868 470C860 468 840 465 817 463C800 463 780 472 770 483C762 492 764 502 780 510C795 516 825 516 843 514C860 511 880 500 886 488C888 480 878 474 870 472"/>
            </svg>

            <div class="note">
              <div>Dynamic DC</div>
              <div>Temperature=27</div>
              <div>Displaying DC Voltages</div>
              <div>PGT = Total power generated = 1.269m</div>
              <div>PDT = Total power dissipated = 1.269m</div>
            </div>
          </div>
          <div class="vscroll">
            <span class="sb-btn"><span class="tri-up"></span></span>
            <span class="sb-thumb"></span>
            <span class="sb-track"></span>
            <span class="sb-btn"><span class="tri-down"></span></span>
          </div>
        </div>

        <div class="edit-bottom">
          <div class="sheets">
            <span class="nav-btn"><span class="tri-down tri-small"></span></span>
            <span class="nav-btn nb-wide"><svg viewBox="0 0 8 8"><path d="M1 0v8M7 0v8L2 4z" stroke="#111" fill="#111"/></svg></span>
            <span class="nav-btn nb-wide"><svg viewBox="0 0 8 8"><path d="M6 0v8L1 4z" fill="#111"/></svg></span>
            <span class="nav-btn nb-wide"><svg viewBox="0 0 8 8"><path d="M2 0v8l5-4z" fill="#111"/></svg></span>
            <span class="nav-btn nb-wide"><svg viewBox="0 0 8 8"><path d="M7 0v8M1 0v8l5-4z" stroke="#111" fill="#111"/></svg></span>
            <svg class="sheet-tabs" viewBox="0 0 341 16">
              <path class="st-line" d="M0 .5H341"/>
              <path class="st-main" d="M0 0L5 16H37L42 0z"/>
              <path class="st-line" d="M0 0L5 16M37 16L42 0M68 0L72 16M72 16L76 0M116 0L120 16M120 16L124 0M147 16L152 0"/>
              <text class="st-bold" x="5" y="12">Main</text>
              <text class="st-text" x="42" y="12">Text</text>
              <text class="st-text" x="77" y="12">Models</text>
              <text class="st-text" x="125" y="12">Info</text>
            </svg>
          </div>
          <span class="split"></span>
          <span class="sb-btn sb-h"><span class="tri-left"></span></span>
          <span class="hthumb"></span>
          <span class="htrack"></span>
          <span class="sb-btn sb-h"><span class="tri-right"></span></span>
          <span class="corner"></span>
        </div>
      </div>

      <!-- Open files -->
      <div class="files">
        <span class="ftab">L1Q1.cir</span>
        <span class="ftab">L2Q2.cir</span>
        <span class="ftab ftab-on">L1Q3.cir</span>
      </div>
    </main>
  </div>

  <!-- Output pane -->
  <section class="output">
    <div class="out-side"><b class="out-x">×</b><span class="grip-v"></span></div>
    <div class="out-body"></div>
  </section>

  <footer class="statusbar">
    <span class="st st-1">DC Operating point</span>
    <span class="st st-2"></span>
    <span class="st st-3"></span>
    <span class="st st-4"></span>
  </footer>

</body>
</html>
```

FILE: styles.css
```css
* {
  margin: 0;
  padding: 0;
  box-sizing: border-box;
}

html, body {
  width: 1920px;
  height: 1080px;
  overflow: hidden;
}

body {
  background: #f0f0f0;
  color: #111;
  font-family: "Liberation Sans", Arial, sans-serif;
  font-size: 12px;
  display: flex;
  flex-direction: column;
}

.defs {
  position: absolute;
  width: 0;
  height: 0;
}

/* Title bar */
.titlebar {
  height: 23px;
  background: #68778a;
  color: #fff;
  display: flex;
  align-items: center;
  flex: none;
}

.app-icon {
  width: 16px;
  height: 16px;
  margin: 0 6px 0 2px;
}

.app-num {
  font-size: 8px;
  font-weight: bold;
  fill: #b01010;
}

.title-text {
  font-size: 11.88px;
}

.win-btns {
  margin-left: auto;
  display: flex;
  align-items: center;
}

.win-min {
  width: 10px;
  height: 1px;
  background: #fff;
  margin-right: 36px;
}

.win-max {
  width: 11px;
  height: 14px;
  margin-right: 35px;
}

.win-close {
  width: 10px;
  height: 13px;
  margin-right: 20px;
}

/* Menu */
.menubar {
  height: 21px;
  background: #fff;
  border-bottom: 2px solid #d8d8d8;
  display: flex;
  align-items: center;
  gap: 13.8px;
  padding-left: 7px;
  flex: none;
}

.menu-icon {
  width: 16px;
  height: 16px;
  margin-right: -7px;
}

.mdi-btns {
  margin-left: auto;
  display: flex;
  gap: 2px;
  padding-right: 2px;
}

.mdi {
  width: 17px;
  height: 17px;
  border: 1px solid #ececec;
  display: flex;
}

.mdi svg {
  width: 15px;
  height: 15px;
}

/* Toolbars */
.top-bars {
  height: 92px;
  background: #fff;
  flex: none;
}

.bar-row {
  display: flex;
  height: 31px;
}

.bar-row2 {
  height: 30px;
  padding-top: 1px;
}

.bar-row3 {
  height: 31px;
}

.tb {
  position: relative;
  background: #f0f0f0;
  border-right: 1px solid #a8a8a8;
  border-bottom: 1px solid #a8a8a8;
  display: flex;
  align-items: center;
  height: 100%;
}

.tb::before {
  content: "";
  position: absolute;
  left: 5px;
  top: 6px;
  bottom: 6px;
  border-left: 2px dotted #b8b8b8;
}

.tb-file { width: 151px; padding-left: 8.5px; }
.tb-edit { width: 176px; padding-left: 10.5px; }
.tb-parts { width: 471px; padding-left: 13.5px; }
.tb-windows { width: 157px; padding-left: 8.5px; }
.tb-run { width: 186px; padding-left: 8.5px; }

.tb-float {
  width: 84px;
  margin-left: 527px;
  padding-left: 11.5px;
  border-left: 1px solid #c8c8c8;
}

.tb-float .b { width: 22.5px; }

.b, .p, .e {
  display: flex;
  align-items: center;
  justify-content: center;
  flex: none;
}

.b { width: 23px; height: 24px; }
.p { width: 19px; height: 24px; }
.e { width: 22.75px; height: 26px; }

.ic {
  width: 17px;
  height: 17px;
}

.on {
  background: #f8f8f8;
  border: 1px solid #d0d0d0;
}

.drop::after, .a::after {
  content: "";
  border-left: 4px solid transparent;
  border-right: 4px solid transparent;
  border-top: 5px solid #111;
}

.a {
  width: 16px;
  height: 24px;
  display: flex;
  align-items: center;
  justify-content: center;
  flex: none;
}

.a-off::after {
  border-top-color: #aaa;
}

.sep {
  display: flex;
  justify-content: center;
  height: 26px;
  flex: none;
}

.sep::after {
  content: "";
  width: 1px;
  background: #a8a8a8;
}

.s4 { width: 4px; }
.s5 { width: 5px; }
.s6 { width: 6px; }
.s7 { width: 7px; }
.s8 { width: 8px; }

.ic-serif {
  font-family: "Liberation Serif", serif;
  font-weight: bold;
  font-size: 21px;
  fill: #111;
}

.ic-a {
  font-family: "Liberation Serif", serif;
  font-weight: bold;
  font-size: 11px;
}

.ic-n {
  font-size: 8px;
  font-weight: bold;
}

.ic-ag {
  font-family: "Liberation Serif", serif;
  font-size: 17px;
}

/* Layout */
.workspace {
  display: flex;
  height: 849px;
  flex: none;
}

/* Component panel */
.side {
  width: 197px;
  flex: none;
  display: flex;
  flex-direction: column;
  border-right: 1px solid #c8c8c8;
}

.side-head {
  height: 17px;
  display: flex;
  align-items: center;
  padding: 0 8px 0 4px;
  flex: none;
}

.grip-h {
  width: 170px;
  height: 5px;
  border-top: 1px solid #999;
  border-bottom: 1px solid #999;
}

.side-x {
  margin-left: auto;
  font-size: 14px;
  line-height: 1;
  color: #111;
}

.side-tabs {
  height: 20px;
  padding-left: 6px;
  display: flex;
  align-items: flex-end;
  gap: 2px;
  flex: none;
  font-size: 11px;
}

.stab {
  height: 18px;
  padding-top: 4px;
  border-right: 1px solid #888;
}

.stab-on {
  width: 48px;
  height: 20px;
  padding: 3px 0 0 4px;
  border-left: 1px solid #fff;
  border-top: 1px solid #fff;
}

.stab-search { width: 42px; padding-left: 2px; }
.stab-fav { width: 53px; padding-left: 4px; }

.side-body {
  margin-left: 6px;
  width: 183px;
  height: 804px;
  padding: 5px 5px 0 0;
  border-left: 1px solid #fff;
  border-right: 2px solid #808080;
  border-bottom: 2px solid #808080;
  display: flex;
  flex-direction: column;
  flex: none;
}

.preview {
  height: 182px;
  background: #fff;
  border-top: 2px solid #808080;
  border-left: 2px solid #808080;
  flex: none;
  overflow: hidden;
}

.preview-svg {
  display: block;
  width: 175px;
  height: 182px;
  margin: -2px 0 0 -2px;
}

.pv-part {
  fill: none;
  stroke: #1a1ab8;
  stroke-width: 1.2;
}

.pv-text {
  font-size: 10px;
  font-weight: bold;
  fill: #d01818;
}

.lib {
  margin-top: 5px;
  border-top: 2px solid #808080;
  border-left: 2px solid #808080;
  flex: 1;
  display: flex;
  flex-direction: column;
}

.compress-row {
  height: 22px;
  padding: 3px 0 0 48px;
  flex: none;
}

.compress {
  display: block;
  width: 76px;
  height: 18px;
  background: #f0f0f0;
  border: 1px solid #fff;
  border-right-color: #777;
  border-bottom-color: #777;
  font-size: 14px;
  line-height: 16px;
  text-align: center;
}

.total {
  height: 18px;
  padding: 1px 0 0 3px;
  font-size: 13.5px;
  line-height: 16px;
  white-space: nowrap;
  flex: none;
}

.tree-wrap {
  display: flex;
  flex: none;
  height: 548px;
}

.tree {
  position: relative;
  width: 157px;
  background: #fff;
  padding-top: 5px;
  overflow: hidden;
  flex: none;
}

.guide {
  position: absolute;
  width: 0;
  border-left: 1px dotted #666;
}

.g1 { left: 6px; top: 0; height: 482px; }
.g2 { left: 23px; top: 0; height: 410px; }
.g2b { left: 23px; top: 490px; height: 58px; }
.g3 { left: 40px; top: 0; height: 158px; }

.row {
  position: relative;
  height: 18px;
  line-height: 18px;
  font-size: 11.9px;
  white-space: nowrap;
}

.l1 { padding-left: 17px; }
.l2 { padding-left: 34px; }
.l3 { padding-left: 51px; }

.row::before {
  content: "";
  position: absolute;
  top: 9px;
  width: 9px;
  border-top: 1px dotted #666;
}

.l1::before { left: 7px; }
.l2::before { left: 24px; }
.l3::before { left: 41px; }

.plus::after, .minus::after {
  position: absolute;
  top: 5px;
  width: 9px;
  height: 9px;
  background: #fff;
  border: 1px solid #777;
  font-size: 10px;
  line-height: 6px;
  text-align: center;
  color: #111;
}

.plus::after { content: "+"; }
.minus::after { content: "−"; }
.l1.plus::after, .l1.minus::after { left: 2px; }
.l2.plus::after { left: 19px; }

.hl {
  background: #f0f0f0;
  padding: 0 2px 0 0;
  display: inline-block;
}

.tree-vs {
  position: relative;
  width: 15px;
  flex: none;
  display: flex;
  flex-direction: column;
  align-items: center;
}

.chev {
  width: 9px;
  height: 6px;
  margin-top: 11px;
  flex: none;
}

.chev-down {
  margin-top: 81px;
}

.tree-thumb {
  width: 15px;
  height: 245px;
  margin-top: 193px;
  background: #cdcdcd;
  flex: none;
}

.tree-hs {
  height: 15px;
  width: 172px;
  display: flex;
  align-items: center;
  flex: none;
  padding-left: 6px;
}

.chev-h {
  width: 6px;
  height: 9px;
}

.tree-hthumb {
  width: 109px;
  height: 15px;
  margin: 0 17px 0 6px;
  background: #cdcdcd;
}

/* Editor */
.main {
  flex: 1;
  display: flex;
  flex-direction: column;
  min-width: 0;
}

.editor {
  height: 822px;
  margin-right: 1px;
  border-top: 1px solid #a8a8a8;
  border-left: 1px solid #a8a8a8;
  border-right: 2px solid #707070;
  border-bottom: 2px solid #707070;
  display: flex;
  flex-direction: column;
  flex: none;
}

.edit-tools {
  height: 34px;
  border-bottom: 2px solid #808080;
  padding-left: 5.5px;
  display: flex;
  align-items: center;
  flex: none;
}

.e-note {
  margin-left: 4px;
}

.edit-mid {
  height: 765px;
  display: flex;
  margin-left: 2px;
  flex: none;
}

.canvas {
  position: relative;
  width: 1697px;
  border-left: 2px solid #808080;
  background: #fff;
  flex: none;
}

.schem {
  display: block;
  width: 1695px;
  height: 765px;
}

.wire, .part, .blade, .marker {
  fill: none;
}

.wire {
  stroke: #107010;
  stroke-width: 2;
}

.part {
  stroke: #0a0ac4;
  stroke-width: 2;
}

.blade {
  stroke: #0a0ac4;
  stroke-width: 1;
}

.pin {
  fill: #fff;
  stroke: #0a0ac4;
  stroke-width: 1.5;
}

.dots circle {
  fill: #f40f0f;
}

.pt text {
  font-family: "Noto Sans", sans-serif;
  font-size: 23px;
  fill: #107010;
}

.nl {
  fill: #fff;
  stroke: #e020e0;
  stroke-width: 2;
}

.nt {
  font-family: "Noto Sans", sans-serif;
  font-size: 22px;
  fill: #000;
}

.nn {
  fill: #e020e0;
}

.marker {
  stroke: #ffe81a;
  stroke-width: 5;
  stroke-linecap: round;
}

.note {
  position: absolute;
  left: 241px;
  top: 483px;
  width: 529px;
  height: 171px;
  padding: 0 0 0 3px;
  background: #c0c0c0;
  border: 2px solid #000;
  color: #800000;
  font-size: 29.1px;
  line-height: 34px;
  white-space: nowrap;
}

/* Scroll bars */
.vscroll {
  width: 16px;
  display: flex;
  flex-direction: column;
  flex: none;
  margin-right: 4px;
}

.sb-btn {
  width: 16px;
  height: 15px;
  background: #f0f0f0;
  border: 1px solid #fff;
  border-right-color: #707070;
  border-bottom-color: #707070;
  display: flex;
  align-items: center;
  justify-content: center;
  flex: none;
}

.vscroll > .sb-btn:first-child {
  height: 19px;
  margin-top: 2px;
}

.sb-thumb {
  height: 143px;
  margin-top: 2px;
  background: #f0f0f0;
  border-bottom: 2px solid #888;
  border-left: 1px solid #e4e4e4;
  flex: none;
}

.sb-track, .htrack {
  flex: 1;
  background: repeating-conic-gradient(#f0f0f0 0 25%, #fcfcfc 0 50%) 0 0 / 2px 2px;
}

.tri-up, .tri-down, .tri-left, .tri-right {
  width: 0;
  height: 0;
  border-style: solid;
  border-color: transparent;
}

.tri-up { border-width: 0 5px 5px; border-bottom-color: #111; }
.tri-down { border-width: 5px 5px 0; border-top-color: #111; }
.tri-left { border-width: 4px 5px 4px 0; border-right-color: #111; }
.tri-right { border-width: 4px 0 4px 5px; border-left-color: #111; }
.tri-small { border-width: 3px 3px 0; }

.edit-bottom {
  height: 21px;
  padding-bottom: 5px;
  display: flex;
  flex: none;
  margin-left: 2px;
}

.sheets {
  width: 433px;
  height: 16px;
  border-left: 2px solid #808080;
  border-bottom: 1px solid #aaa;
  padding-left: 5px;
  display: flex;
  align-items: center;
  flex: none;
}

.nav-btn {
  width: 12px;
  height: 15px;
  margin-right: 3px;
  background: #f0f0f0;
  border: 1px solid #fff;
  border-right-color: #444;
  border-bottom-color: #444;
  display: flex;
  align-items: center;
  justify-content: center;
  flex: none;
}

.nb-wide {
  width: 14px;
  margin-right: 2px;
}

.nb-wide svg {
  width: 7px;
  height: 8px;
}

.sheet-tabs {
  width: 341px;
  height: 16px;
  flex: none;
  margin-left: 5px;
}

.st-line {
  fill: none;
  stroke: #111;
  stroke-width: 1;
}

.st-main {
  fill: #fff;
}

.st-bold {
  font-size: 11px;
  font-weight: bold;
}

.st-text {
  font-size: 11px;
}

.split {
  width: 3px;
  height: 16px;
  background: #d0d0d0;
  border-left: 1px solid #555;
  border-right: 1px solid #555;
  flex: none;
}

.sb-h {
  width: 15px;
  height: 16px;
}

.hthumb {
  width: 427px;
  height: 16px;
  background: #f0f0f0;
  border-right: 1px solid #888;
  border-bottom: 2px solid #999;
  flex: none;
}

.corner {
  width: 20px;
  flex: none;
}

/* File tabs */
.files {
  height: 27px;
  padding: 0 0 0 4px;
  display: flex;
  align-items: flex-start;
  gap: 3px;
  flex: none;
}

.ftab {
  width: 49px;
  height: 19px;
  border-right: 1px solid #999;
  border-bottom: 2px solid #999;
  font-size: 11px;
  line-height: 18px;
  text-align: center;
}

.ftab-on {
  width: 53px;
  height: 22px;
  line-height: 23px;
  background: #f8f8f8;
  border-right: 2px solid #888;
}

/* Output pane */
.output {
  height: 75px;
  border-top: 1px solid #aaa;
  padding-top: 4px;
  display: flex;
  flex: none;
}

.out-side {
  width: 15px;
  height: 63px;
  display: flex;
  flex-direction: column;
  align-items: flex-start;
  padding-left: 3px;
  flex: none;
}

.out-x {
  font-size: 12px;
  line-height: 12px;
}

.grip-v {
  width: 5px;
  height: 48px;
  margin-left: 2px;
  border-left: 1px solid #999;
  border-right: 1px solid #999;
}

.out-body {
  flex: 1;
  height: 63px;
  background: #fff;
  margin-right: 2px;
}

/* Status bar */
.statusbar {
  height: 20px;
  border-bottom: 2px solid #333;
  display: flex;
  gap: 3px;
  flex: none;
}

.st {
  height: 18px;
  border-top: 1px solid #999;
  border-left: 1px solid #999;
  background: #f0f0f0;
}

.st-1 {
  width: 158px;
  border-left: 0;
  border-right: 1px solid #fff;
  padding-left: 2px;
  font-size: 14.5px;
  line-height: 18px;
  white-space: nowrap;
}

.st-2 { width: 1568px; }
.st-3 { width: 83px; }
.st-4 { flex: 1; }
```
